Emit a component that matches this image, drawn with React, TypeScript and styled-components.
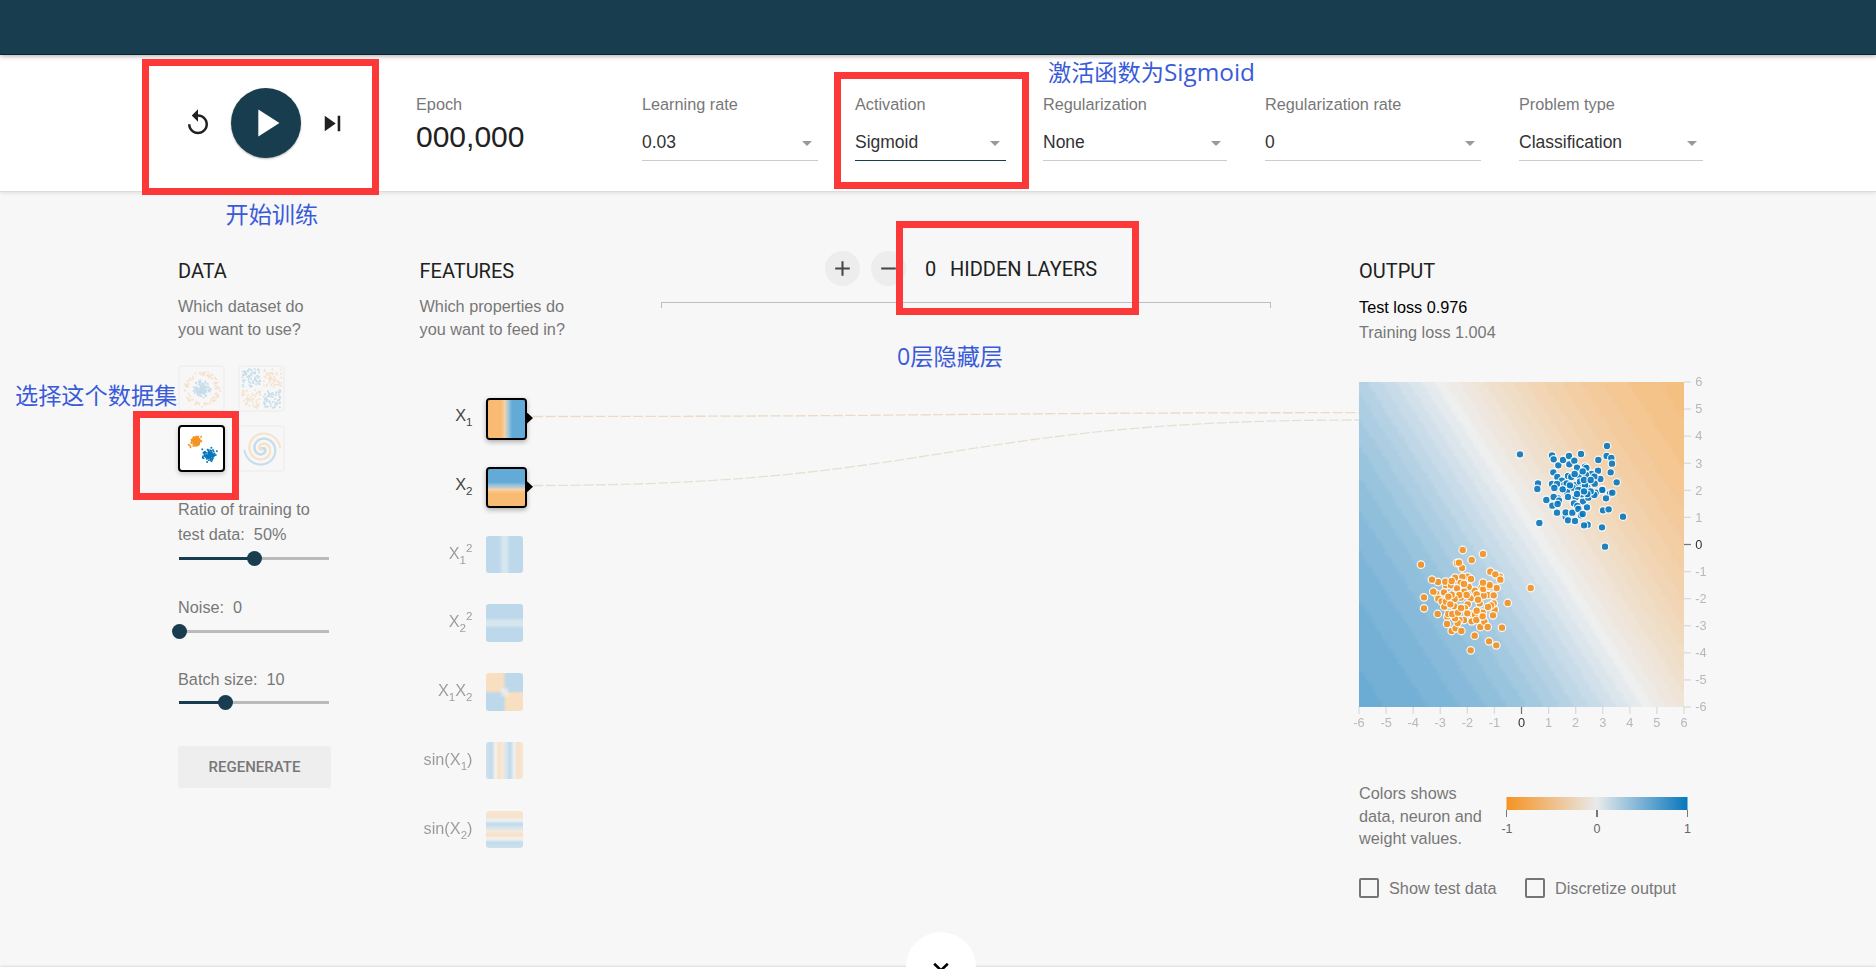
import React, { useLayoutEffect, useRef } from 'react';
import styled, { createGlobalStyle } from 'styled-components';

const TEAL = '#183d4e';
const ORANGE = '#f59322';
const BLUE = '#0877bd';
const SANS = '"Liberation Sans", Arial, sans-serif';
const ROBOTO = 'Roboto, "Liberation Sans", sans-serif';

const GlobalStyle = createGlobalStyle`
  * { box-sizing: border-box; }
  body { margin: 0; background: #f7f7f7; font-family: ${SANS}; color: #777; overflow: hidden; }
  button { border: 0; padding: 0; font: inherit; color: inherit; background: none; }
`;

/* ---------- page frame ---------- */

const Page = styled.div`
  position: relative;
  display: flex;
  flex-direction: column;
  width: 1876px;
  height: 969px;
  overflow: hidden;
  background: #f7f7f7;
`;

const Banner = styled.header`
  position: relative;
  z-index: 1;
  flex: none;
  height: 55px;
  background: ${TEAL};
  border-bottom: 1px solid #10222e;
  box-shadow: 0 1px 5px rgba(0, 0, 0, 0.35);
`;

const Toolbar = styled.section`
  flex: none;
  display: grid;
  grid-template-columns: 233px 226px 213px 188px 222px 254px 184px;
  height: 137px;
  padding: 39px 0 0 183px;
  background: #fff;
  border-bottom: 1px solid #dcdcdc;
  box-shadow: 0 1px 4px rgba(0, 0, 0, 0.1);
`;

const Playback = styled.div`
  display: flex;
  align-items: center;
  height: 70px;
  margin-top: -6px;
  color: #212121;
`;

const IconButton = styled.button`
  display: flex;
`;

const PlayButton = styled.button`
  display: flex;
  align-items: center;
  justify-content: center;
  width: 70px;
  height: 70px;
  margin: 0 16px 0 18px;
  border-radius: 50%;
  background: ${TEAL};
  color: #fff;
  box-shadow: 0 1px 2px rgba(0, 0, 0, 0.3);
`;

const Label = styled.div`
  font-size: 16.25px;
  line-height: 20px;
  color: #777;
  white-space: nowrap;
`;

const EpochNumber = styled.div`
  margin-top: 5px;
  font-size: 30px;
  line-height: 36px;
  color: #212121;
`;

const Field = styled.div<{ $gap: number }>`
  margin-right: ${(p) => p.$gap}px;
`;

const Select = styled.div<{ $active?: boolean }>`
  display: flex;
  justify-content: space-between;
  height: 31px;
  margin-top: 16px;
  padding-right: 6px;
  border-bottom: 1px solid ${(p) => (p.$active ? TEAL : '#ccc')};
  font-size: 17.5px;
  line-height: 24px;
  color: #333;
`;

const Caret = styled.span`
  width: 10px;
  height: 5px;
  margin-top: 11px;
  background: #999;
  clip-path: polygon(0 0, 100% 0, 50% 100%);
`;

const Main = styled.main`
  position: relative;
  flex: 1;
  display: grid;
  grid-template-columns: 241.5px 241.5px 698px 1fr;
  padding-left: 178px;
`;

const Column = styled.section`
  padding-top: 67px;
`;

const Heading = styled.h4`
  margin: 0 0 12px;
  font-family: ${ROBOTO};
  font-weight: 400;
  font-size: 20px;
  line-height: 24px;
  color: #212121;
`;

const Intro = styled.p`
  margin: 0;
  font-size: 16.25px;
  line-height: 22.5px;
  white-space: nowrap;
`;

/* ---------- data column ---------- */

const Thumbs = styled.div`
  display: grid;
  grid-template-columns: 47px 47px;
  gap: 13px 13px;
  margin-top: 25px;
`;

const Thumb = styled.div<{ $selected?: boolean }>`
  height: 47px;
  border: 2px solid ${(p) => (p.$selected ? '#000' : 'rgba(0,0,0,0.025)')};
  border-radius: 4px;
  background: ${(p) => (p.$selected ? '#fff' : 'transparent')};
  box-shadow: ${(p) => (p.$selected ? '0 2px 5px rgba(0,0,0,0.2)' : 'none')};
  svg { display: block; opacity: ${(p) => (p.$selected ? 1 : 0.2)}; }
`;

const Control = styled.div<{ $space: number }>`
  margin-top: ${(p) => p.$space}px;
  font-size: 16.25px;
  line-height: 25px;
  white-space: nowrap;
`;

const Value = styled.span`
  margin-left: 9px;
`;

const Track = styled.div<{ $at: number }>`
  display: flex;
  align-items: center;
  width: 150px;
  height: 15px;
  margin: 3.75px 0 0 1px;
  background: linear-gradient(90deg, ${TEAL} ${(p) => p.$at}%, #bbb ${(p) => p.$at}%) center / 100% 3px no-repeat;
`;

const Knob = styled.span<{ $at: number }>`
  width: 15px;
  height: 15px;
  margin-left: calc(${(p) => p.$at}% - 7.5px);
  border-radius: 50%;
  background: ${TEAL};
`;

const Regenerate = styled.button`
  display: block;
  width: 153px;
  height: 42px;
  margin-top: 36px;
  border-radius: 3px;
  background: #eee;
  font-family: ${ROBOTO};
  font-weight: 500;
  font-size: 15px;
  color: #777;
`;

/* ---------- features column ---------- */

const FeatureList = styled.div`
  margin-top: 58px;
`;

const Feature = styled.div<{ $on: boolean }>`
  display: flex;
  align-items: flex-start;
  height: 68.75px;
  opacity: ${(p) => (p.$on ? 1 : 0.4)};
`;

const FeatureLabel = styled.div<{ $on: boolean }>`
  width: 53px;
  margin: 5px 13.5px 0 0;
  text-align: right;
  font-size: 16.25px;
  line-height: 24px;
  white-space: nowrap;
  color: ${(p) => (p.$on ? '#444' : '#111')};
  sub, sup { font-size: 11.6px; line-height: 0; }
  sub { vertical-align: -5px; }
  sup { vertical-align: 7.5px; }
`;

const Tile = styled.div<{ $on: boolean }>`
  position: relative;
  width: ${(p) => (p.$on ? 41 : 37)}px;
  height: ${(p) => (p.$on ? 41.5 : 37.5)}px;
  border: ${(p) => (p.$on ? '2px solid #000' : '0')};
  border-radius: 4px;
  background: #fff;
  box-shadow: ${(p) => (p.$on ? '0 2px 5px rgba(0,0,0,0.3)' : 'none')};
  canvas { display: block; width: 100%; height: 100%; border-radius: ${(p) => (p.$on ? 1 : 3)}px; }
`;

const Port = styled.span`
  position: absolute;
  right: -8px;
  top: 12.5px;
  width: 6px;
  height: 11px;
  background: #000;
  clip-path: polygon(0 0, 100% 50%, 0 100%);
`;

const Links = styled.svg`
  position: absolute;
  left: 533px;
  top: 208px;
`;

/* ---------- hidden layers ---------- */

const LayersColumn = styled.section`
  padding-top: 59px;
  width: 610px;
`;

const LayerControls = styled.div`
  display: flex;
  align-items: center;
  padding-left: 164px;
  gap: 11px;
  font-family: ${ROBOTO};
  font-size: 20px;
  line-height: 24px;
  color: #212121;
`;

const RoundButton = styled.button`
  display: flex;
  align-items: center;
  justify-content: center;
  width: 35px;
  height: 35px;
  border-radius: 50%;
  background: #ededed;
  color: #484848;
`;

const LayerCount = styled.span`
  margin-left: 8px;
  width: 14px;
`;

const Bracket = styled.div`
  height: 6px;
  margin-top: 16px;
  border: 1px solid #bdbdbd;
  border-bottom: 0;
`;

/* ---------- output column ---------- */

const Loss = styled.div<{ $strong?: boolean }>`
  font-size: 16.25px;
  line-height: 25px;
  color: ${(p) => (p.$strong ? '#000' : '#777')};
`;

const Chart = styled.div`
  position: relative;
  height: 350px;
  margin-top: 37px;
  canvas { display: block; width: 325px; height: 325px; }
`;

const Plot = styled.svg`
  position: absolute;
  left: -10px;
  top: -10px;
`;

const Legend = styled.div`
  display: flex;
  margin-top: 50px;
  svg { flex: none; }
`;

const LegendText = styled.p`
  width: 136px;
  margin: 0;
  font-size: 16.25px;
  line-height: 22.5px;
  white-space: nowrap;
`;

const Options = styled.div`
  display: flex;
  margin-top: 28.5px;
`;

const Option = styled.label<{ $width: number }>`
  display: flex;
  align-items: center;
  width: ${(p) => p.$width}px;
  gap: 10px;
  height: 20px;
  font-size: 16.25px;
  white-space: nowrap;
`;

const Box = styled.span`
  width: 20px;
  height: 20px;
  border: 2px solid #757575;
  border-radius: 2px;
`;

/* ---------- overlays ---------- */

const ArticleEdge = styled.div`
  position: absolute;
  left: 0;
  right: 0;
  top: 967px;
  height: 20px;
  background: #fff;
  box-shadow: 0 0 3px rgba(0, 0, 0, 0.2);
`;

const MoreButton = styled.button`
  position: absolute;
  left: 906px;
  top: 932px;
  display: flex;
  justify-content: center;
  width: 70px;
  height: 70px;
  border-radius: 50%;
  background: #fff;
  color: #000;
`;

const Frame = styled.div<{ $x: number; $y: number; $w: number; $h: number }>`
  position: absolute;
  z-index: 2;
  left: ${(p) => p.$x}px;
  top: ${(p) => p.$y}px;
  width: ${(p) => p.$w}px;
  height: ${(p) => p.$h}px;
  border: 7px solid #fc3838;
`;

const Note = styled.div<{ $x: number; $y: number }>`
  position: absolute;
  z-index: 2;
  left: ${(p) => p.$x}px;
  top: ${(p) => p.$y}px;
  font-family: "Open Sans", "Noto Sans CJK SC", sans-serif;
  font-size: 23.2px;
  line-height: 30px;
  white-space: nowrap;
  color: #3a5bd9;
`;

const Latin = styled.span`
  font-size: 24.4px;
  line-height: 0;
`;

/* ---------- heat maps ---------- */

type Fn = (x: number, y: number) => number;
const SHADES = 31;
const mix = (a: number[], b: number[], t: number) => a.map((v, i) => v + (b[i] - v) * t);

function shade(v: number) {
  const i = Math.min(SHADES - 1, Math.max(0, Math.floor(((v + 1) / 2) * SHADES)));
  const s = (i / (SHADES - 1)) * 2 - 1;
  const mid = [232, 234, 235];
  return s < 0 ? mix(mid, [245, 147, 34], -s) : mix(mid, [8, 119, 189], s);
}

function HeatMap({ fn, size }: { fn: Fn; size: number }) {
  const ref = useRef<HTMLCanvasElement>(null);
  useLayoutEffect(() => {
    const ctx = ref.current!.getContext('2d')!;
    const img = ctx.createImageData(size, size);
    const step = 100 / size;
    for (let j = 0; j < size; j++) {
      for (let i = 0; i < size; i++) {
        let sum = 0;
        for (let b = 0; b < step; b++) {
          for (let a = 0; a < step; a++) {
            sum += fn(((i * step + a) / 99) * 12 - 6, 6 - ((j * step + b) / 99) * 12);
          }
        }
        const c = shade(sum / (step * step));
        img.data.set([c[0], c[1], c[2], 160], (j * size + i) * 4);
      }
    }
    ctx.putImageData(img, 0, 0);
  }, [fn, size]);
  return <canvas ref={ref} width={size} height={size} />;
}

const features: { label: React.ReactNode; on: boolean; fn: Fn }[] = [
  { label: <>X<sub>1</sub></>, on: true, fn: (x) => x },
  { label: <>X<sub>2</sub></>, on: true, fn: (_, y) => y },
  { label: <>X<sub>1</sub><sup>2</sup></>, on: false, fn: (x) => x * x },
  { label: <>X<sub>2</sub><sup>2</sup></>, on: false, fn: (_, y) => y * y },
  { label: <>X<sub>1</sub>X<sub>2</sub></>, on: false, fn: (x, y) => x * y },
  { label: <>sin(X<sub>1</sub>)</>, on: false, fn: (x) => Math.sin(x) },
  { label: <>sin(X<sub>2</sub>)</>, on: false, fn: (_, y) => Math.sin(y) },
];

const outputFn: Fn = (x, y) => Math.tanh(-0.136 * x - 0.087 * y + 0.113);

/* ---------- dataset thumbnails ---------- */

function random(seed: number) {
  let s = seed;
  return () => {
    s = (s * 1664525 + 1013904223) % 4294967296;
    return s / 4294967296;
  };
}

type Dot = [number, number, string];

function circleDots(): Dot[] {
  const r = random(7);
  const out: Dot[] = [];
  for (let i = 0; i < 220; i++) {
    const inner = i < 120;
    const rad = inner ? r() * 9 : 13.5 + r() * 4.5;
    const a = r() * Math.PI * 2;
    out.push([22 + rad * Math.sin(a), 22 + rad * Math.cos(a), inner ? BLUE : ORANGE]);
  }
  return out;
}

function xorDots(): Dot[] {
  const r = random(21);
  const out: Dot[] = [];
  for (let i = 0; i < 230; i++) {
    const x = (r() * 2 - 1) * 18;
    const y = (r() * 2 - 1) * 18;
    out.push([22 + x + Math.sign(x) * 1.5, 21.5 + y + Math.sign(y) * 1.5, x * y < 0 ? ORANGE : BLUE]);
  }
  return out;
}

function gaussDots(): Dot[] {
  const r = random(5);
  const n = () => (r() + r() + r() + r() - 2) * 5;
  const out: Dot[] = [];
  for (let i = 0; i < 90; i++) out.push([15.5 + n(), 14.2 + n(), ORANGE], [29.3 + n(), 28.3 + n(), BLUE]);
  return out;
}

function spiralDots(): Dot[] {
  const out: Dot[] = [];
  for (let i = 0; i < 110; i++) {
    const k = i / 110;
    [0, Math.PI].forEach((d) => {
      const t = 1.75 * k * 2 * Math.PI + d;
      out.push([22.3 + k * 18 * Math.sin(t), 22 - k * 18 * Math.cos(t), d ? ORANGE : BLUE]);
    });
  }
  return out;
}

function DotPicture({ dots, size = 1.7 }: { dots: Dot[]; size?: number }) {
  return (
    <svg width="43" height="43" viewBox="0 0 43 43">
      {dots.map(([x, y, c], i) => (
        <rect key={i} x={x - size / 2} y={y - size / 2} width={size} height={size} fill={c} />
      ))}
    </svg>
  );
}

/* ---------- scatter plot (coordinates in thirds of a pixel) ---------- */

const blueDots = [
  540, 613, 636, 616, 641, 628, 655, 646, 669, 630, 687, 618, 688, 643, 703, 632, 723, 612, 775, 630, 801, 588, 800, 618,
  814, 624, 816, 641, 812, 667, 830, 697, 640, 667, 652, 681, 735, 650, 711, 653, 739, 654, 755, 672, 718, 677, 738, 675,
  684, 678, 694, 681, 774, 662, 781, 687, 763, 680, 666, 692, 594, 700, 592, 717, 636, 702, 651, 702, 673, 705, 680, 700,
  643, 714, 708, 705, 698, 713, 720, 695, 747, 700, 742, 713, 726, 714, 764, 701, 786, 718, 735, 705, 619, 750, 598, 819,
  655, 745, 641, 741, 657, 752, 637, 767, 653, 762, 651, 788, 677, 800, 677, 787, 684, 811, 705, 813, 697, 788, 681, 726,
  684, 741, 707, 742, 729, 754, 725, 733, 745, 743, 768, 728, 763, 735, 787, 720, 810, 731, 817, 728, 798, 745, 849, 800,
  789, 781, 806, 778, 786, 832, 795, 890, 743, 824, 732, 826, 702, 760, 712, 768, 715, 777, 741, 772, 723, 796, 728, 792,
  715, 720, 752, 724, 742, 732, 668, 718, 690, 706, 732, 690, 752, 690, 704, 672, 728, 664, 711, 732, 732, 724,
];

const orangeDots = [
  368, 210, 429, 222, 243, 254, 395, 240, 351, 249, 366, 264, 357, 248, 451, 275, 480, 290, 466, 283, 481, 299, 470, 324,
  572, 324, 503, 369, 294, 306, 276, 299, 318, 316, 316, 305, 333, 316, 345, 293, 335, 303, 383, 290, 367, 291, 393, 297,
  252, 352, 252, 385, 289, 341, 280, 335, 295, 356, 305, 364, 312, 337, 313, 380, 318, 365, 293, 402, 322, 410, 335, 453,
  321, 432, 347, 445, 364, 453, 372, 420, 358, 420, 353, 429, 404, 467, 421, 441, 433, 425, 443, 441, 447, 484, 469, 496,
  392, 511, 486, 443, 464, 389, 459, 406, 461, 370, 453, 376, 444, 381, 443, 345, 461, 346, 431, 347, 425, 323, 430, 327,
  449, 320, 449, 315, 429, 308, 404, 332, 362, 309, 386, 321, 373, 334, 351, 325, 392, 355, 383, 373, 362, 353, 358, 345,
  344, 357, 335, 344, 343, 379, 331, 373, 325, 402, 345, 415, 337, 402, 354, 398, 375, 385, 363, 384, 395, 403, 382, 400,
  405, 404, 428, 398, 410, 392, 395, 424, 409, 420, 428, 409, 419, 370, 410, 343, 414, 359, 372, 312, 380, 345, 325, 350,
];

function Points({ list, top, color }: { list: number[]; top: number; color: string }) {
  const out: React.ReactNode[] = [];
  for (let i = 0; i < list.length; i += 2) {
    out.push(
      <circle key={i} cx={(list[i] - 57) / 3} cy={(list[i + 1] - top) / 3} r="3.8" fill={color} stroke="#fff" strokeWidth="1.2" opacity="0.9" />,
    );
  }
  return <g>{out}</g>;
}

const ticks = Array.from({ length: 13 }, (_, i) => i - 6);

function OutputPlot() {
  return (
    <Plot width="380" height="370" viewBox="-10 -10 380 370" fontFamily={SANS} fontSize="12.8">
      <Points list={orangeDots} top={-294} color={ORANGE} />
      <Points list={blueDots} top={396} color={BLUE} />
      {ticks.map((t) => {
        const x = ((t + 6) / 12) * 325;
        const line = t === 0 ? '#777' : '#dadada';
        const text = t === 0 ? '#333' : '#b8b8b8';
        return (
          <g key={t}>
            <line x1={x} x2={x} y1="325" y2="332" stroke={line} strokeWidth="1.25" />
            <text x={x} y="344.9" textAnchor="middle" fill={text}>{t}</text>
            <line x1="325" x2="332" y1={325 - x} y2={325 - x} stroke={line} strokeWidth="1.25" />
            <text x="336.2" y={329.3 - x} fill={text}>{t}</text>
          </g>
        );
      })}
    </Plot>
  );
}

function LegendScale() {
  return (
    <svg width="206" height="67" fontFamily={SANS} fontSize="12.5" fill="#666">
      <defs>
        <linearGradient id="scale">
          <stop offset="0" stopColor={ORANGE} />
          <stop offset="0.5" stopColor="#e8eaeb" />
          <stop offset="1" stopColor={BLUE} />
        </linearGradient>
      </defs>
      <rect x="11.5" y="15" width="181" height="13" fill="url(#scale)" />
      <path d="M11.5 28v7M192.5 28v7" stroke="#777" />
      <path d="M102 28v7" stroke="#777" strokeWidth="2" />
      <g textAnchor="middle">
        <text x="12" y="50.7">-1</text>
        <text x="102" y="50.7">0</text>
        <text x="192.5" y="50.7">1</text>
      </g>
    </svg>
  );
}

function Glyph({ d, size }: { d: string; size: number }) {
  return (
    <svg width={size} height={size} viewBox="0 0 24 24" fill="currentColor">
      <path d={d} />
    </svg>
  );
}

function Dropdown({ label, value, gap, active }: { label: string; value: string; gap: number; active?: boolean }) {
  return (
    <Field $gap={gap}>
      <Label>{label}</Label>
      <Select $active={active}>
        {value}
        <Caret />
      </Select>
    </Field>
  );
}

function Slider({ at }: { at: number }) {
  return (
    <Track $at={at}>
      <Knob $at={at} />
    </Track>
  );
}

export default function App() {
  return (
    <Page>
      <GlobalStyle />
      <Banner />
      <Toolbar>
        <Playback>
          <IconButton aria-label="Reset">
            <Glyph size={30} d="M12 5V1L7 6l5 5V7c3.31 0 6 2.69 6 6s-2.69 6-6 6-6-2.69-6-6H4c0 4.42 3.58 8 8 8s8-3.58 8-8-3.58-8-8-8z" />
          </IconButton>
          <PlayButton aria-label="Run">
            <Glyph size={46} d="M8 5v14l11-7z" />
          </PlayButton>
          <IconButton aria-label="Step">
            <Glyph size={31} d="M6 18l8.5-6L6 6v12zM16 6v12h2V6h-2z" />
          </IconButton>
        </Playback>
        <div>
          <Label>Epoch</Label>
          <EpochNumber>000,000</EpochNumber>
        </div>
        <Dropdown label="Learning rate" value="0.03" gap={37} />
        <Dropdown label="Activation" value="Sigmoid" gap={37} active />
        <Dropdown label="Regularization" value="None" gap={38} />
        <Dropdown label="Regularization rate" value="0" gap={38} />
        <Dropdown label="Problem type" value="Classification" gap={0} />
      </Toolbar>

      <Main>
        <Column>
          <Heading>DATA</Heading>
          <Intro>Which dataset do<br />you want to use?</Intro>
          <Thumbs>
            <Thumb><DotPicture dots={circleDots()} /></Thumb>
            <Thumb><DotPicture dots={xorDots()} /></Thumb>
            <Thumb $selected><DotPicture dots={gaussDots()} /></Thumb>
            <Thumb><DotPicture dots={spiralDots()} size={2} /></Thumb>
          </Thumbs>
          <Control $space={25}>
            Ratio of training to<br />test data:<Value>50%</Value>
            <Slider at={50} />
          </Control>
          <Control $space={29}>
            Noise:<Value>0</Value>
            <Slider at={0} />
          </Control>
          <Control $space={28.2}>
            Batch size:<Value>10</Value>
            <Slider at={31} />
          </Control>
          <Regenerate>REGENERATE</Regenerate>
        </Column>

        <Column>
          <Heading>FEATURES</Heading>
          <Intro>Which properties do<br />you want to feed in?</Intro>
          <FeatureList>
            {features.map((f, i) => (
              <Feature key={i} $on={f.on}>
                <FeatureLabel $on={f.on}>{f.label}</FeatureLabel>
                <Tile $on={f.on}>
                  <HeatMap fn={f.fn} size={10} />
                  {f.on && <Port />}
                </Tile>
              </Feature>
            ))}
          </FeatureList>
        </Column>

        <LayersColumn>
          <LayerControls>
            <RoundButton aria-label="Add layer">
              <Glyph size={25} d="M19 13h-6v6h-2v-6H5v-2h6V5h2v6h6v2z" />
            </RoundButton>
            <RoundButton aria-label="Remove layer">
              <Glyph size={25} d="M19 13H5v-2h14v2z" />
            </RoundButton>
            <LayerCount>0</LayerCount>
            <span>HIDDEN LAYERS</span>
          </LayerControls>
          <Bracket />
        </LayersColumn>

        <Column>
          <Heading>OUTPUT</Heading>
          <Loss $strong>Test loss 0.976</Loss>
          <Loss>Training loss 1.004</Loss>
          <Chart>
            <HeatMap fn={outputFn} size={100} />
            <OutputPlot />
          </Chart>
          <Legend>
            <LegendText>Colors shows<br />data, neuron and<br />weight values.</LegendText>
            <LegendScale />
          </Legend>
          <Options>
            <Option $width={166}><Box />Show test data</Option>
            <Option $width={166}><Box />Discretize output</Option>
          </Options>
        </Column>

        <Links width="826" height="90" fill="none" strokeWidth="1.3" strokeDasharray="10 2.5">
          <path d="M0 16.5C413 16.5 413 12.7 826 12.7" stroke="#ecdac4" />
          <path d="M0 85.5C413 85.5 413 20 826 20" stroke="#e8dfd3" />
        </Links>
      </Main>

      <ArticleEdge />
      <MoreButton aria-label="Read more">
        <svg width="70" height="40" viewBox="0 0 70 40" fill="none" stroke="currentColor" strokeWidth="2.6">
          <path d="M28.2 31.7l6.8 6.6 6.8-6.6" />
        </svg>
      </MoreButton>

      <Frame $x={142} $y={59} $w={237} $h={136} />
      <Frame $x={834} $y={72} $w={195} $h={117} />
      <Frame $x={896} $y={221} $w={243} $h={94} />
      <Frame $x={133} $y={411} $w={106} $h={89} />
      <Note $x={225.5} $y={199}>开始训练</Note>
      <Note $x={1048} $y={56.5}>激活函数为<Latin>Sigmoid</Latin></Note>
      <Note $x={897} $y={341}>0层隐藏层</Note>
      <Note $x={15} $y={380}>选择这个数据集</Note>
    </Page>
  );
}
